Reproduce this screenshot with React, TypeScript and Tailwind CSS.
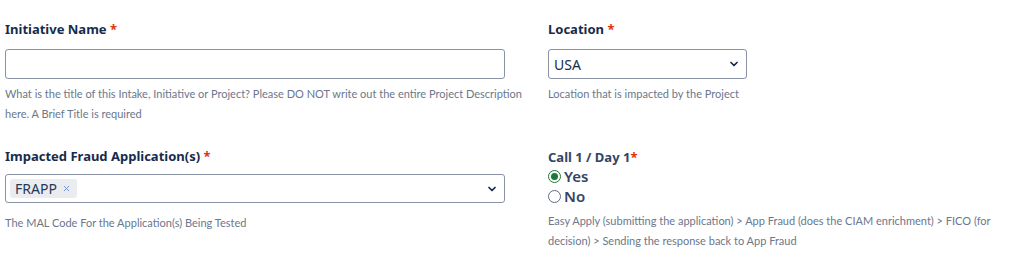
import { ChevronDown, X } from "lucide-react";

const font = { fontFamily: '"Noto Sans", "Liberation Sans", sans-serif' };
const helpFont = { fontFamily: 'Lato, "Noto Sans", sans-serif' };

function Label({ text }: { text: string }) {
    return (
        <div className="text-[13px] font-bold leading-[20px] text-[#172b4d]">
            {text} <span className="text-[#de350b]">*</span>
        </div>
    );
}

function Help({ children }: { children: React.ReactNode }) {
    return (
        <div className="text-[11px] leading-[20px] text-[#6b778c]" style={helpFont}>
            {children}
        </div>
    );
}

export default function App() {
    return (
        <div className="flex w-[1026px] h-[262px] bg-white pt-[19px]" style={font}>
            <div className="flex flex-col w-[525px] ml-[5px]">
                <Label text="Initiative Name" />
                <div className="mt-[10px] h-[30px] w-[500px] rounded-[3px] border border-[#8993a4] bg-white" />
                <div className="mt-[5px]">
                    <Help>
                        What is the title of this Intake, Initiative or Project? Please DO NOT write out the entire Project Description here. A Brief Title is required
                    </Help>
                </div>
                <div className="mt-[22px]">
                    <Label text="Impacted Fraud Application(s)" />
                </div>
                <div className="mt-[8px] flex h-[29px] w-[500px] items-center justify-between rounded-[3px] border border-[#8993a4] bg-white pl-[4px] pr-[6px]">
                    <span className="flex h-[19px] items-center gap-[5px] rounded-[3px] bg-[#ebecf0] pl-[5px] pr-[6px] text-[14px] text-[#253858]">
                        FRAPP
                        <X size={9} strokeWidth={2.5} className="text-[#6f8fd8]" />
                    </span>
                    <ChevronDown size={12} strokeWidth={3.5} className="text-[#172b4d]" />
                </div>
                <div className="mt-[10px]">
                    <Help>The MAL Code For the Application(s) Being Tested</Help>
                </div>
            </div>
            <div className="flex flex-col ml-[18px] w-[474px]">
                <Label text="Location" />
                <div className="mt-[10px] flex h-[30px] w-[199px] items-center justify-between rounded-[3px] border border-[#8993a4] bg-white pl-[5px] pr-[6px] text-[14px] text-[#172b4d]">
                    USA
                    <ChevronDown size={12} strokeWidth={3.5} className="text-[#172b4d]" />
                </div>
                <div className="mt-[5px]">
                    <Help>Location that is impacted by the Project</Help>
                </div>
                <div className="mt-[44px] text-[13px] font-bold leading-[18px] text-[#344563]">
                    Call 1 / Day 1<span className="text-[#de350b]">*</span>
                </div>
                <label className="flex items-center gap-[3px] text-[15px] font-semibold leading-[20px] text-[#344563]">
                    <span className="flex h-[13px] w-[13px] items-center justify-center rounded-full border border-[#1b7a3a]">
                        <span className="h-[7px] w-[7px] rounded-full bg-[#1b7a3a]" />
                    </span>
                    Yes
                </label>
                <label className="flex items-center gap-[3px] text-[15px] font-semibold leading-[20px] text-[#344563]">
                    <span className="h-[13px] w-[13px] rounded-full border border-[#5e6c84]" />
                    No
                </label>
                <div className="mt-[5px]">
                    <Help>
                        Easy Apply (submitting the application) &gt; App Fraud (does the CIAM enrichment) &gt; FICO (for decision) &gt; Sending the response back to App Fraud
                    </Help>
                </div>
            </div>
        </div>
    );
}
